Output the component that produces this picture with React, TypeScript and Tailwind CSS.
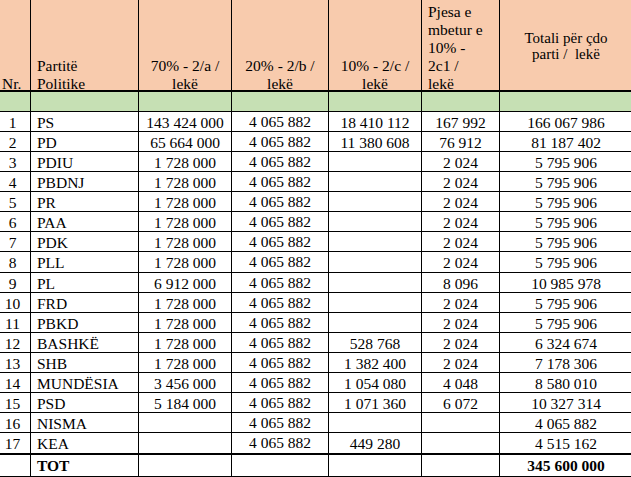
const COLS = [
  "w-[31px]",
  "w-[108px]",
  "w-[93px]",
  "w-[97px]",
  "w-[93px]",
  "w-[78px]",
  "w-[133px]",
] as const;

const SAME = ["1 728 000", "4 065 882", "", "2 024", "5 795 906"];

const ROWS: { nr: number; party: string; vals: string[]; h: string }[] = [
  { nr: 1, party: "PS", vals: ["143 424 000", "4 065 882", "18 410 112", "167 992", "166 067 986"], h: "h-[20px]" },
  { nr: 2, party: "PD", vals: ["65 664 000", "4 065 882", "11 380 608", "76 912", "81 187 402"], h: "h-[20px]" },
  { nr: 3, party: "PDIU", vals: SAME, h: "h-[20px]" },
  { nr: 4, party: "PBDNJ", vals: SAME, h: "h-[20px]" },
  { nr: 5, party: "PR", vals: SAME, h: "h-[20px]" },
  { nr: 6, party: "PAA", vals: SAME, h: "h-[20px]" },
  { nr: 7, party: "PDK", vals: SAME, h: "h-[20px]" },
  { nr: 8, party: "PLL", vals: SAME, h: "h-[21px]" },
  { nr: 9, party: "PL", vals: ["6 912 000", "4 065 882", "", "8 096", "10 985 978"], h: "h-[20px]" },
  { nr: 10, party: "FRD", vals: SAME, h: "h-[20px]" },
  { nr: 11, party: "PBKD", vals: SAME, h: "h-[20px]" },
  { nr: 12, party: "BASHKË", vals: ["1 728 000", "4 065 882", "528 768", "2 024", "6 324 674"], h: "h-[20px]" },
  { nr: 13, party: "SHB", vals: ["1 728 000", "4 065 882", "1 382 400", "2 024", "7 178 306"], h: "h-[20px]" },
  { nr: 14, party: "MUNDËSIA", vals: ["3 456 000", "4 065 882", "1 054 080", "4 048", "8 580 010"], h: "h-[20px]" },
  { nr: 15, party: "PSD", vals: ["5 184 000", "4 065 882", "1 071 360", "6 072", "10 327 314"], h: "h-[20px]" },
  { nr: 16, party: "NISMA", vals: ["", "4 065 882", "", "", "4 065 882"], h: "h-[20px]" },
];

const LAST = { nr: 17, party: "KEA", vals: ["", "4 065 882", "449 280", "", "4 515 162"] };

function Row({ nr, party, vals, h, thick }: { nr: number; party: string; vals: string[]; h: string; thick?: boolean }) {
  return (
    <div className={`flex ${h} ${thick ? "border-b-2" : "border-b"} border-black`}>
      <div className={`${COLS[0]} shrink-0 border-r border-black pr-[5px] pt-[1px] text-center`}>{nr}</div>
      <div className={`${COLS[1]} shrink-0 border-r border-black pl-[6px] pt-[1px]`}>{party}</div>
      <div className={`${COLS[2]} shrink-0 border-r border-black pt-[1px] text-center`}>{vals[0]}</div>
      <div className={`${COLS[3]} shrink-0 border-r border-black text-center`}>{vals[1]}</div>
      <div className={`${COLS[4]} shrink-0 border-r border-black pt-[1px] text-center`}>{vals[2]}</div>
      <div className={`${COLS[5]} shrink-0 border-r border-black pt-[1px] text-center`}>{vals[3]}</div>
      <div className={`${COLS[6]} shrink-0 border-r border-black pt-[1px] text-center`}>{vals[4]}</div>
    </div>
  );
}

export default function App() {
  return (
    <div className="h-[477px] w-[631px] overflow-hidden bg-white text-[15.5px] leading-[19px] text-black [font-family:Liberation_Serif,serif]">
      {/* header */}
      <div className="flex h-[92px] border-b-2 border-black bg-[#f8cbad] leading-[18px]">
        <div className={`${COLS[0]} flex shrink-0 flex-col justify-end border-r border-black pl-[2px]`}>
          <div className="-mb-[3px]">Nr.</div>
        </div>
        <div className={`${COLS[1]} flex shrink-0 flex-col justify-end border-r border-black pl-[6px]`}>
          <div className="-mb-[3px]">
            Partitë
            <br />
            Politike
          </div>
        </div>
        <div className={`${COLS[2]} flex shrink-0 flex-col justify-end border-r border-black text-center`}>
          <div className="-mb-[3px]">
            70% - 2/a /
            <br />
            lekë
          </div>
        </div>
        <div className={`${COLS[3]} flex shrink-0 flex-col justify-end border-r border-black text-center`}>
          <div className="-mb-[3px]">
            20% - 2/b /
            <br />
            lekë
          </div>
        </div>
        <div className={`${COLS[4]} flex shrink-0 flex-col justify-end border-r border-black text-center`}>
          <div className="-mb-[3px]">
            10% - 2/c /
            <br />
            lekë
          </div>
        </div>
        <div className={`${COLS[5]} flex shrink-0 flex-col justify-end border-r border-black pl-[6px]`}>
          <div className="-mb-[3px] whitespace-nowrap">
            Pjesa e
            <br />
            mbetur e
            <br />
            10% -
            <br />
            2c1 /
            <br />
            lekë
          </div>
        </div>
        <div className={`${COLS[6]} flex shrink-0 flex-col justify-center border-r border-black pt-[2px] text-center text-[15px] leading-[16px]`}>
          <div>
            Totali për çdo
            <br />
            parti /&nbsp; lekë
          </div>
        </div>
      </div>

      {/* green spacer row */}
      <div className="flex h-[20px] border-b border-black bg-[#c6e0b4]">
        {COLS.map((w) => (
          <div key={w} className={`${w} shrink-0 border-r border-black`} />
        ))}
      </div>

      {ROWS.map((r) => (
        <Row key={r.nr} {...r} />
      ))}
      <Row {...LAST} h="h-[22px]" thick />

      {/* total */}
      <div className="flex h-[22px] border-b border-black font-bold">
        <div className={`${COLS[0]} shrink-0 border-r border-black`} />
        <div className={`${COLS[1]} shrink-0 border-r border-black pl-[6px] pt-[1px]`}>TOT</div>
        <div className={`${COLS[2]} shrink-0 border-r border-black`} />
        <div className={`${COLS[3]} shrink-0 border-r border-black`} />
        <div className={`${COLS[4]} shrink-0 border-r border-black`} />
        <div className={`${COLS[5]} shrink-0 border-r border-black`} />
        <div className={`${COLS[6]} shrink-0 border-r border-black pt-[1px] text-center`}>345 600 000</div>
      </div>
    </div>
  );
}
